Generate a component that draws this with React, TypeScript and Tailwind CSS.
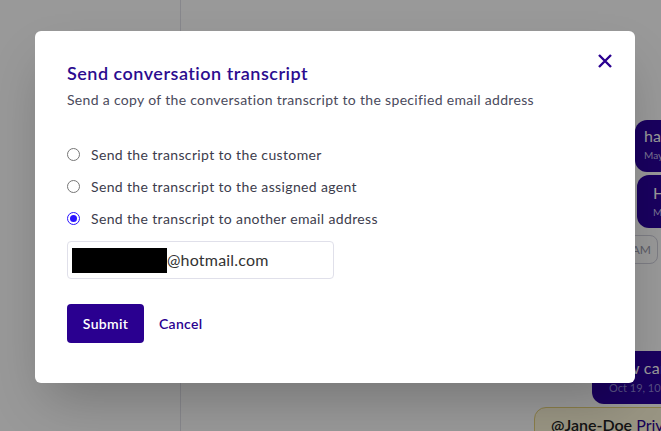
import { useState } from "react";

const OPTIONS = [
  { id: "customer", label: "Send the transcript to the customer" },
  { id: "agent", label: "Send the transcript to the assigned agent" },
  { id: "other", label: "Send the transcript to another email address" },
];

function Radio({ checked }: { checked: boolean }) {
  return (
    <span
      className={`flex h-[13px] w-[13px] shrink-0 items-center justify-center rounded-full border ${
        checked ? "border-[#2a14ff]" : "border-[#767676]"
      }`}
    >
      {checked && <span className="h-[7px] w-[7px] rounded-full bg-[#2a14ff]" />}
    </span>
  );
}

export default function App() {
  const [choice, setChoice] = useState("other");

  return (
    <div
      className="relative h-[431px] w-[661px] overflow-hidden bg-white"
      style={{ fontFamily: "Lato, 'Noto Sans', sans-serif" }}
    >
      {/* Page underneath */}
      <div className="flex h-full">
        <aside className="w-[181px] shrink-0 border-r border-[#e2e2ea]" />
        <main className="flex flex-1 flex-col items-end pt-[120px] [&>*]:shrink-0">
          <div className="-mr-[94px] flex h-[52px] w-[120px] flex-col rounded-l-xl bg-[#2b009f] px-[9px] pt-[4px] text-white">
            <span className="text-[16px] leading-[24px]">hai there</span>
            <span className="text-[10px] text-[#c9c2f0]">May 3, 9:41 AM</span>
          </div>
          <div className="-mr-[96px] mt-[3px] flex h-[53px] w-[120px] flex-col rounded-xl bg-[#2b009f] px-[16px] pt-[6px] text-white">
            <span className="text-[16px] leading-[24px]">Hello</span>
            <span className="text-[10px] text-[#c9c2f0]">May 3, 9:42 AM</span>
          </div>
          <div className="mr-[3px] mt-[7px] flex h-[29px] items-center rounded-lg border border-[#d0d0dc] px-[6px] text-[12px] text-[#9a9aac]">
            Oct 19, 10:00 AM
          </div>
          <div className="-mr-[60px] mt-[87px] flex h-[53px] w-[129px] flex-col rounded-l-xl bg-[#2b009f] pl-[17px] pt-[5px] text-white">
            <span className="whitespace-nowrap text-[16px] leading-[24px] tracking-[0.3px]">new car</span>
            <span className="whitespace-nowrap text-[11px] leading-[16px] text-[#8f86d8]">Oct 19, 10:01 AM</span>
          </div>
          <div className="-mr-[80px] mt-[3px] h-[40px] w-[207px] rounded-xl border border-[#e6d27a] bg-[#fff8da] pl-[16px] pt-[5px] text-[16px] whitespace-nowrap text-[#222]">
            <span className="font-semibold underline">@Jane-Doe</span>{" "}
            <span className="text-[#2a0090]">Private note</span>
          </div>
        </main>
      </div>

      {/* Overlay + dialog */}
      <div className="absolute inset-0 bg-black/40 pl-[35px] pt-[31px]">
        <div className="flex h-[352px] w-[600px] flex-col rounded-md bg-white px-[32px] pt-[30px] shadow-2xl">
          <div className="flex items-start justify-between">
            <div>
              <h2 className="text-[18px] font-semibold leading-[24px] tracking-[0.5px] text-[#2b0c8f]">
                Send conversation transcript
              </h2>
              <p className="mt-[5px] text-[14px] leading-[20px] tracking-[0.32px] text-[#4a4a5c]">
                Send a copy of the conversation transcript to the specified email address
              </p>
            </div>
            <button className="-mr-[10px] mt-[-8px] text-[#2a0090]" aria-label="Close">
              <svg width="16" height="16" viewBox="0 0 16 16" fill="none">
                <path d="M2 2L14 14M14 2L2 14" stroke="currentColor" strokeWidth="2.4" />
              </svg>
            </button>
          </div>

          <div className="mt-[34px] flex flex-col gap-[12px]">
            {OPTIONS.map((o) => (
              <label
                key={o.id}
                className="flex h-[20px] cursor-pointer items-center gap-[11px] text-[14px] tracking-[0.36px] text-[#3c3c4c]"
                onClick={() => setChoice(o.id)}
              >
                <Radio checked={choice === o.id} />
                <span>{o.label}</span>
              </label>
            ))}
          </div>

          <div className="mt-[13px] flex h-[38px] w-[267px] items-center rounded border border-[#e0e0ea] pl-[4px] text-[16px] tracking-[0.2px] text-[#333]">
            <span className="h-[25px] w-[95px] bg-black" />
            <span>@hotmail.com</span>
          </div>

          <div className="mt-[25px] flex items-center gap-[15px]">
            <button className="h-[39px] w-[77px] rounded bg-[#2a0090] text-[14px] font-semibold tracking-[0.3px] text-white">
              Submit
            </button>
            <button className="text-[14px] font-semibold tracking-[0.3px] text-[#2a0090]">Cancel</button>
          </div>
        </div>
      </div>
    </div>
  );
}
